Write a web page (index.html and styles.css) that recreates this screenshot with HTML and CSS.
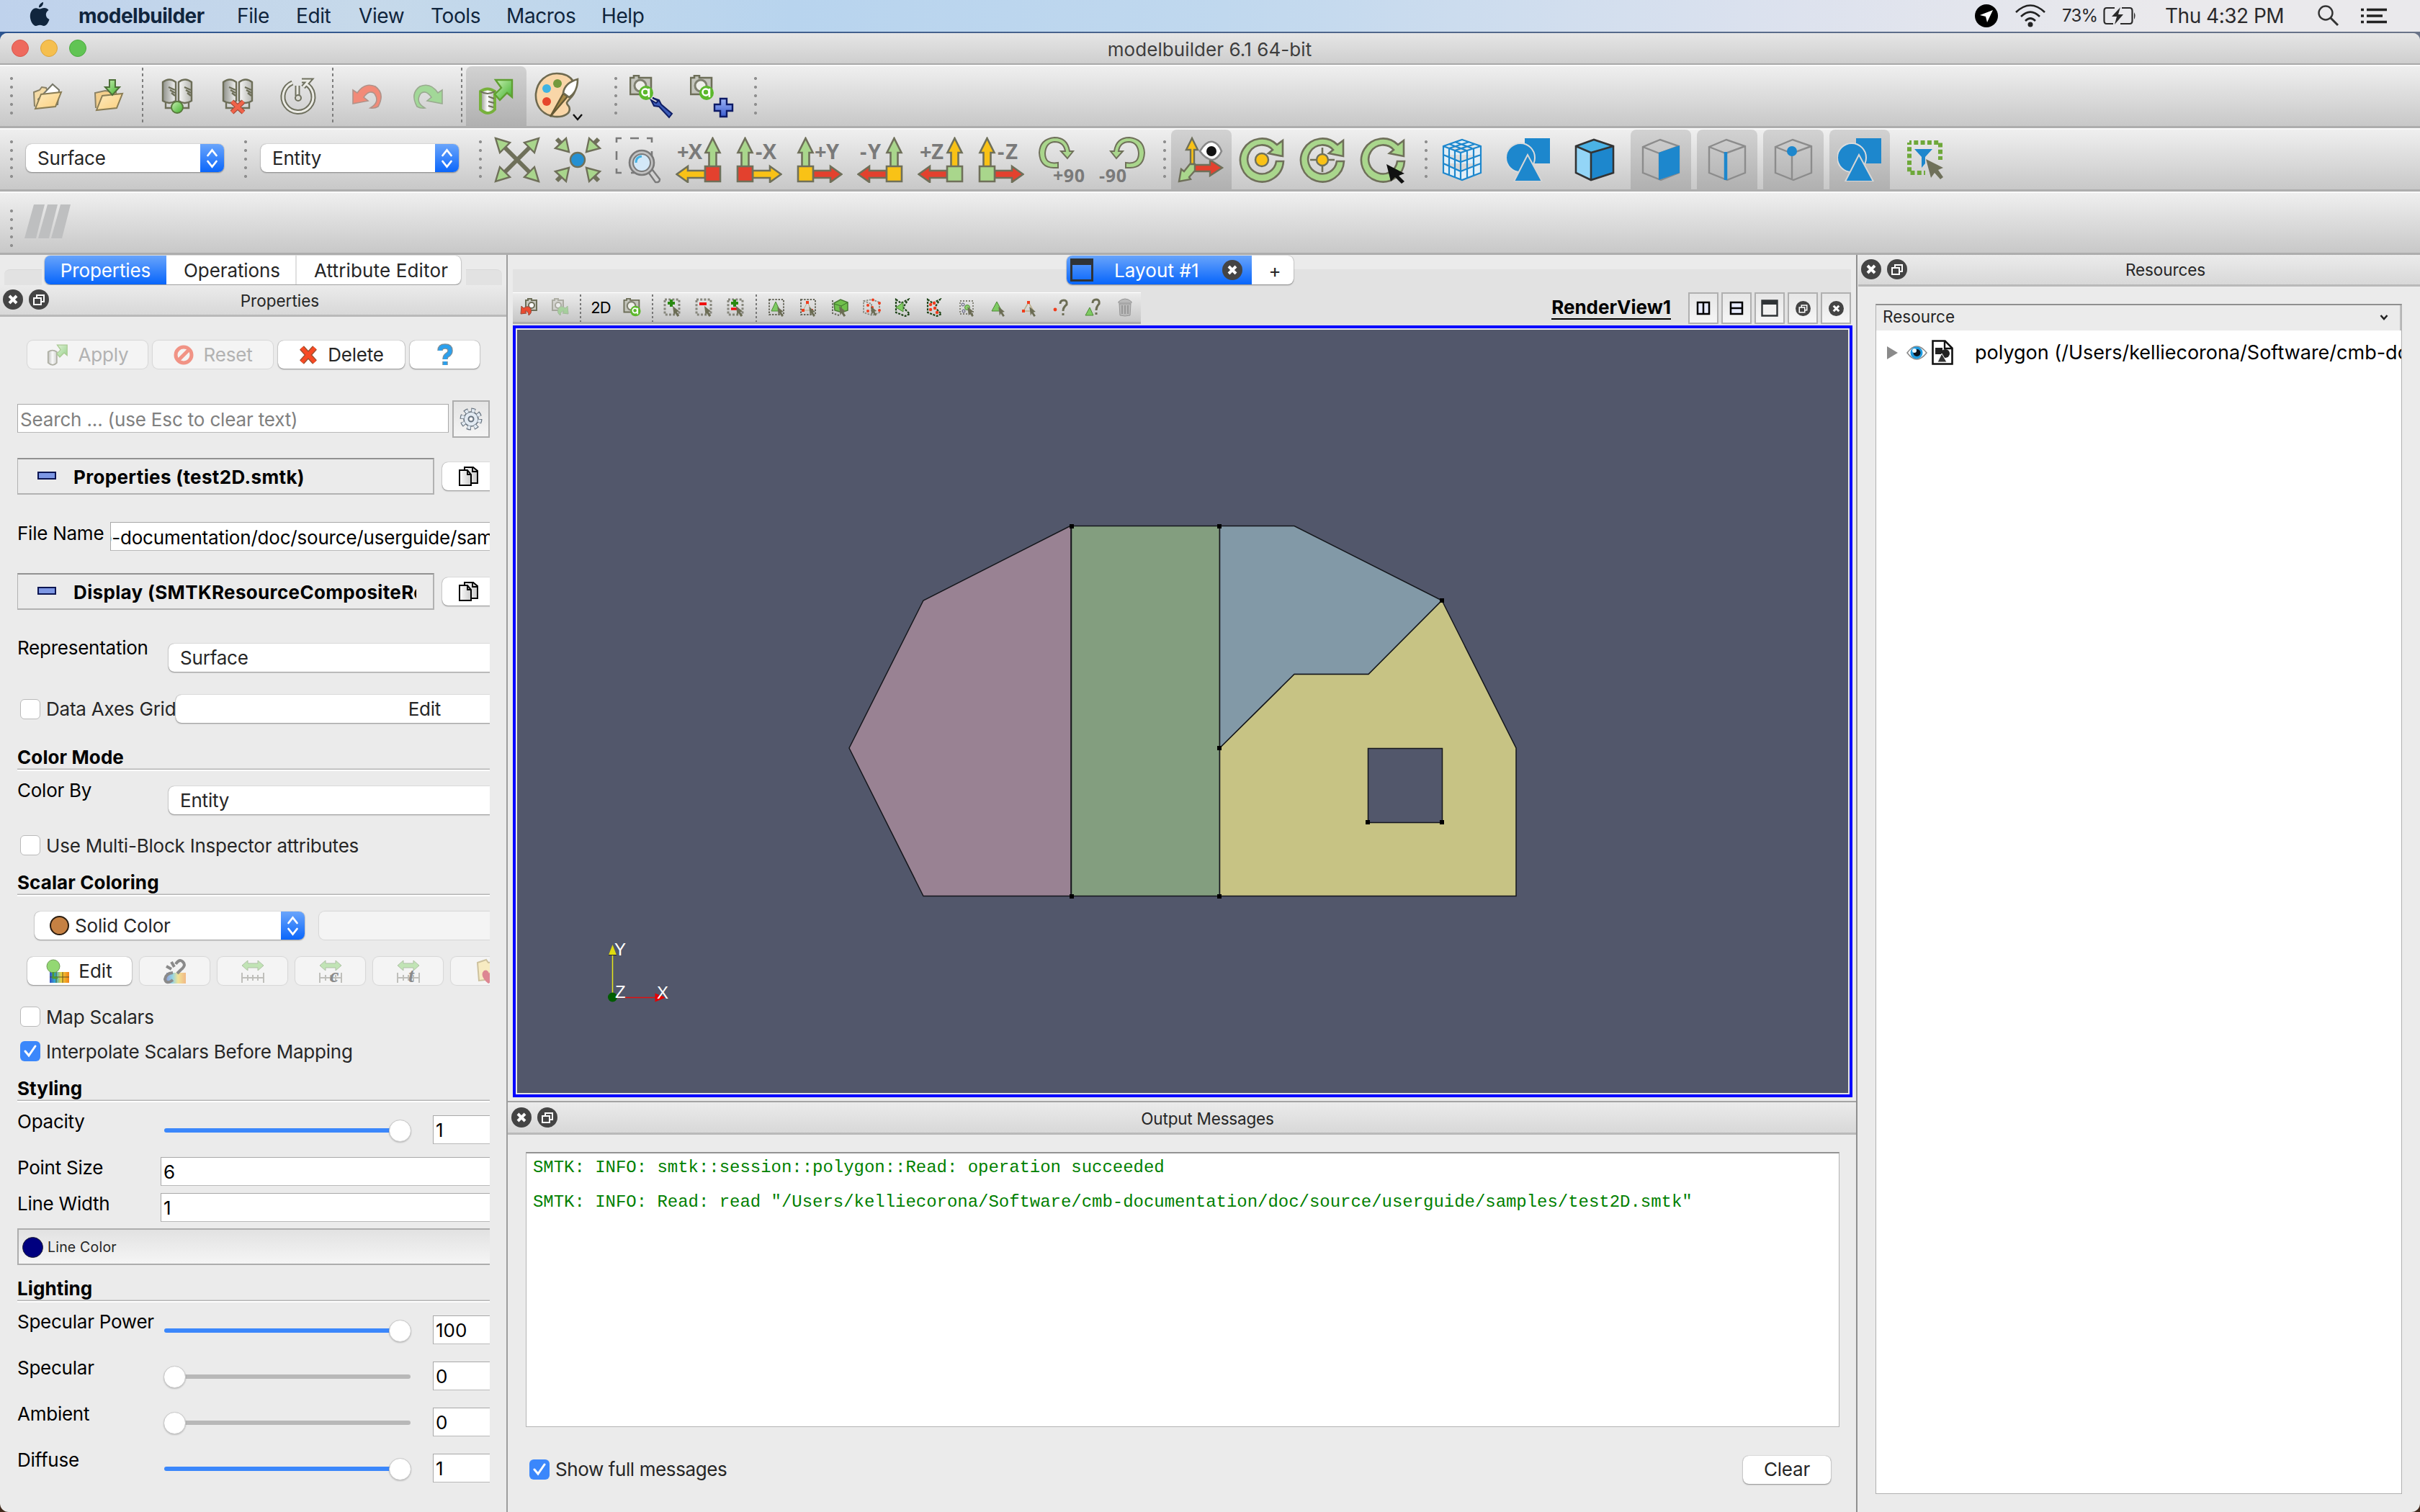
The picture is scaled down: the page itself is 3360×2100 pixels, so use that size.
FILE: index.html
```html
<!DOCTYPE html>
<html lang="en">
<head>
<meta charset="utf-8">
<title>modelbuilder 6.1 64-bit</title>
<link rel="stylesheet" href="styles.css">
</head>
<body>
<svg class="defs" width="0" height="0">
  <defs>
    <linearGradient id="gFolder" x1="0" y1="0" x2="1" y2="1"><stop offset="0" stop-color="#fdebc0"/><stop offset="1" stop-color="#fbcf7c"/></linearGradient>
    <linearGradient id="gSteel" x1="0" x2="1"><stop offset="0" stop-color="#8f918a"/><stop offset=".5" stop-color="#fff"/><stop offset="1" stop-color="#b5b6b0"/></linearGradient>
    <linearGradient id="gGreen" x1="0" y1="0" x2="1" y2="1"><stop offset="0" stop-color="#c9f0b4"/><stop offset="1" stop-color="#3fb02a"/></linearGradient>
    <linearGradient id="gNavy" x1="0" y1="0" x2="0" y2="1"><stop offset="0" stop-color="#9db4f4"/><stop offset="1" stop-color="#3b5ccf"/></linearGradient>
    <linearGradient id="gRainbow" x1="0" x2="1"><stop offset="0" stop-color="#3a4fc0"/><stop offset=".3" stop-color="#2fb4d8"/><stop offset=".6" stop-color="#f0d23a"/><stop offset="1" stop-color="#f07f1a"/></linearGradient>
    <linearGradient id="gPage" x1="0" x2="1"><stop offset="0" stop-color="#fff"/><stop offset="1" stop-color="#c9c9c9"/></linearGradient>
  </defs>
  <symbol id="closeBadge" viewBox="0 0 28 28"><circle cx="14" cy="14" r="14" fill="#444"/><path d="M9 9l10 10M19 9L9 19" stroke="#fff" stroke-width="4"/></symbol>
  <symbol id="floatBadge" viewBox="0 0 28 28"><circle cx="14" cy="14" r="14" fill="#444"/><path d="M11 12V8h10v9h-4M7 12h10v9H7z" fill="none" stroke="#fff" stroke-width="2"/></symbol>
  <symbol id="cursor" viewBox="0 0 12 18"><path d="M0 0l11 9-4 1 4 6-3 2-4-6-2 4z" fill="#6c6d55"/></symbol>
  <symbol id="updown" viewBox="0 0 33 39"><path d="M10.500 16l6-7.500 6 7.500M10.500 24l6 7.500 6-7.500" fill="none" stroke="#fff" stroke-width="2.800" stroke-linecap="round"/></symbol>
  <symbol id="wire" viewBox="0 0 56 60"><path d="M3 12L27 2l26 9v37L28 58 3 48zM3 12l23 9 27-10M26 21v37" fill="none" stroke="#8c8c8c" stroke-width="2.400"/></symbol>
  <symbol id="shapes" viewBox="0 0 62 60"><path d="M26 0h35v35H26z" fill="#1d87cd"/><circle cx="20" cy="27" r="20" fill="#1d87cd" stroke="#dcdcdc" stroke-width="2"/><path d="M30 23l20 37H11z" fill="#1d87cd" stroke="#d6d6d6" stroke-width="2"/></symbol>
  <symbol id="camera" viewBox="0 0 34 36"><path d="M1 4h5V1h7v3h17v23H1z" fill="#c4c5bc" stroke="#6d6e58" stroke-width="2.600"/><circle cx="15" cy="15" r="8" fill="#efefea" stroke="#7f8070" stroke-width="3"/><circle cx="23" cy="25" r="10" fill="#5cb82c"/><circle cx="22" cy="24" r="4.500" fill="none" stroke="#fff" stroke-width="2.500"/><path d="M27 19v12" stroke="#fff" stroke-width="2.500"/></symbol>
  <symbol id="servers" viewBox="0 0 44 50"><path d="M2 5q9-7 18 0v26q-9 6-18 0zM24 5q9-7 18 0v26q-9 6-18 0z" fill="url(#gSteel)" stroke="#6d6e58" stroke-width="2.400"/><path d="M10 12l9 4m-7 0l7 4m-5 0l5 4M32 12l9 4m-7 0l7 4m-5 0l5 4M6 34v7h10M38 34v7H28" stroke="#6d6e58" stroke-width="2.400" fill="none"/></symbol>
  <symbol id="copyPages" viewBox="0 0 30 28"><path d="M9 1h12l6 5v17H9z" fill="url(#gPage)" stroke="#000" stroke-width="2"/><path d="M2 5h11l5 6v15H2z" fill="url(#gPage)" stroke="#000" stroke-width="2"/><path d="M13 5v6h5M20 1v6h6" stroke="#000" stroke-width="1.800" fill="none"/></symbol>
  <symbol id="ring" viewBox="0 0 64 64"><path d="M62 34A30 30 0 1 1 53 11L61 5V27L41 23 47 18A20 20 0 1 0 52 34Z" fill="#a9d68c" stroke="#6f705a" stroke-width="2.600"/></symbol>
  <symbol id="axisUp" viewBox="0 0 64 64"><path d="M51.500 2l10 20h-5v20h-10V22h-5z" stroke="#6f705a" stroke-width="2.600"/></symbol>
  <symbol id="axisLeft" viewBox="0 0 64 64"><path d="M1.500 52L17 41v6h24v10H17v6z" stroke="#6f705a" stroke-width="2.600"/></symbol>
  <symbol id="axisUpL" viewBox="0 0 64 64"><path d="M12.500 2l10 20h-5v20h-10V22h-5z" stroke="#6f705a" stroke-width="2.600"/></symbol>
  <symbol id="axisRight" viewBox="0 0 64 64"><path d="M62.500 52L47 41v6H23v10h24v6z" stroke="#6f705a" stroke-width="2.600"/></symbol>
  <symbol id="range" viewBox="0 0 32 34"><path d="M1 9l8-7v4h14V2l8 7-8 7v-4H9v4z" fill="#8fd678" stroke="#6d8f5a"/><path d="M1 19v14M31 19v14M1 26h30M9 22v8M16 22v8M23 22v8" stroke="#8c8c84" stroke-width="2"/></symbol>
  <symbol id="dashBox" viewBox="0 0 26 26"><path d="M2 2h20v21H2z" fill="none" stroke="#86867c" stroke-width="3" stroke-dasharray="3 2.200"/></symbol>
  <symbol id="dashFine" viewBox="0 0 26 26"><path d="M3 2h20v21H3z" fill="none" stroke="#66665a" stroke-width="2" stroke-dasharray="2.400 1.800"/></symbol>
  <symbol id="dashPoly" viewBox="0 0 26 26"><path d="M3 2l7 5 10-5-7 11 9 9-6 3L3 20z" fill="none" stroke="#1d4216" stroke-width="2.200" stroke-dasharray="3 1.600"/></symbol>
</svg>

<header class="menubar">
  <svg class="apple" width="28" height="34" viewBox="0 0 28 34"><path d="M19 0c.5 4-3 7.500-6 7.500C12.500 4 16 .5 19 0zM14 9.500C16 9.500 17.500 8 20.500 8c2.500 0 4.500 1.300 6 3-5.500 3.500-4.500 10.500 1 13C26 29 23 33 20 33c-2.300 0-3-1.200-5.500-1.200S11 33 8.800 33C5 33 .8 26 .8 19.500.8 12.500 5 8.200 9 8.200c2.300 0 3.700 1.300 5 1.300z" fill="#10253d"/></svg>
  <span class="mi app">modelbuilder</span><span class="mi file">File</span><span class="mi edit">Edit</span><span class="mi view">View</span><span class="mi tools">Tools</span><span class="mi macros">Macros</span><span class="mi help">Help</span>
  <div class="status">
    <svg class="s-loc" width="32" height="32" viewBox="0 0 32 32"><circle cx="16" cy="16" r="16"/><path d="M25 8L7 15l8 2 2 8z" fill="#fff"/></svg>
    <svg class="s-wifi" width="42" height="32" viewBox="0 0 42 32"><g fill="none" stroke="#222" stroke-width="2.600"><path d="M1 11q20-19 40 0M8 17q13-13 26 0M14 23q7-7 14 0"/></g><circle cx="21" cy="28" r="3.500" fill="#222"/></svg>
    <span class="pct">73%</span>
    <svg class="s-bat" width="46" height="26" viewBox="0 0 46 26"><path d="M16 2H5Q1.500 2 1.500 6v14q0 4 3.500 4h9M26 2h11q3.500 0 3.500 4v14q0 4-3.500 4H24" fill="none" stroke="#2a2a2a" stroke-width="2.200"/><path d="M43 8q3 5 0 10zM24 1L12 14h7l-3 11 12-14h-7z" fill="#2a2a2a"/></svg>
    <span class="clock">Thu 4:32 PM</span>
    <svg class="s-find" width="30" height="30" viewBox="0 0 30 30"><circle cx="11" cy="11" r="9.500" fill="none" stroke="#333" stroke-width="2.400"/><path d="M18 18l10 10" stroke="#333" stroke-width="3"/></svg>
    <svg class="s-list" width="36" height="22" viewBox="0 0 36 22"><path d="M0 2.500h4M8 2.500h28M0 11h4M8 11h22M0 19.500h4M8 19.500h28" stroke="#222" stroke-width="3.600"/></svg>
  </div>
</header>

<main class="window">
  <div class="titlebar"><i class="light red"></i><i class="light yellow"></i><i class="light green"></i><span class="wtitle">modelbuilder 6.1 64-bit</span></div>

  <div class="toolbar">
    <i class="handle first"></i>
    <div class="tb wide"><svg width="42" height="40" viewBox="0 0 42 40"><path d="M3 34L2 14l8-3 3-4 6 1 2 5 9-1 1 6" fill="#f4dba6" stroke="#8a8267" stroke-width="2"/><path d="M8 24L28 3l9 8-2 20-22 2z" fill="#fff" stroke="#77786a" stroke-width="2"/><path d="M4 37l8-20 28-3-8 20z" fill="url(#gFolder)" stroke="#8a7d55" stroke-width="2"/></svg></div>
    <div class="tb wide"><svg width="42" height="48" viewBox="0 0 42 48"><path d="M3 40L2 19l14-3 15 2 1 6" fill="#f4cf8c" stroke="#8a8267" stroke-width="2"/><path d="M4 43l8-20 28-3-8 20z" fill="url(#gFolder)" stroke="#8a7d55" stroke-width="2"/><path d="M22 1h8v10h6L26 22 16 11h6z" fill="url(#gGreen)" stroke="#4d7038" stroke-width="2"/></svg></div>
    <i class="sep narrow"></i>
    <div class="tb"><svg width="44" height="50"><use href="#servers"/><circle cx="22" cy="40" r="8" fill="url(#gGreen)" stroke="#587a3c" stroke-width="2"/></svg></div>
    <div class="tb"><svg width="44" height="50"><use href="#servers"/><path d="M14 32l16 15M30 32L14 47" stroke="#a04a38" stroke-width="7"/><path d="M14 32l16 15M30 32L14 47" stroke="#f0634a" stroke-width="4.500"/></svg></div>
    <div class="tb"><svg width="50" height="50" viewBox="0 0 50 50"><path d="M17 6A21 21 0 1 0 35 7M30 3l10 0-8 9M24 10v14" fill="none" stroke="#6f705f" stroke-width="7"/><path d="M17 6A21 21 0 1 0 35 7M30 3l10 0-8 9M24 10v14" fill="none" stroke="#ecece6" stroke-width="3"/><circle cx="25" cy="27" r="4" fill="#dcdcd4" stroke="#6f705f" stroke-width="2"/></svg></div>
    <i class="sep"></i>
    <div class="tb"><svg width="44" height="36" viewBox="0 0 44 36"><path d="M2 28V9l6 4Q18-2 33 4q14 10 4 28-5 3-11 2 14-8 6-20-7-6-15 5l6 5z" fill="#f28a78" stroke="#b0938a" stroke-width="1.600"/></svg></div>
    <div class="tb"><svg width="44" height="36" viewBox="0 0 44 36"><path d="M42 28V9l-6 4Q26-2 11 4-3 14 7 32q5 3 11 2-14-8-6-20 7-6 15 5l-6 5z" fill="#a2d898" stroke="#9aaa90" stroke-width="1.600"/></svg></div>
    <i class="sep narrow"></i>
    <div class="tb on"><svg width="50" height="52" viewBox="0 0 50 52"><path d="M3 19q10-7 20 0v25q-9 10-20 0z" fill="url(#gSteel)" stroke="#77b13c" stroke-width="4"/><path d="M3 19q10 6 20 0M14 26l8 3M14 33l8 2M14 39l7 2" fill="none" stroke="#6d6e58" stroke-width="2"/><path d="M24 3h23v24l-7-6-10 10-7-8 9-9z" fill="url(#gGreen)" stroke="#5f9f32" stroke-width="2.400"/></svg></div>
    <div class="tb palette"><svg width="66" height="68" viewBox="0 0 66 68"><path d="M31 2C54 2 63 22 52 34c-8 9-9 8-4 14 4 10-8 15-20 14C8 59 1 44 2 30 4 12 17 2 31 2z" fill="#f9d6a8" stroke="#6f6a50" stroke-width="2.600"/><circle cx="32" cy="16" r="6" fill="#74993d"/><circle cx="17" cy="23" r="6" fill="#3fb3e3"/><circle cx="17" cy="41" r="6" fill="#e6452c"/><path d="M22 62l18-32 6 4z" fill="#a88a48" stroke="#665a35" stroke-width="2.400"/><path d="M40 29q2-14 20-19 0 18-12 25z" fill="#fff" stroke="#6f6a50" stroke-width="2.600"/><path d="M54 59l6 7 6-7" fill="none" stroke="#111" stroke-width="2.400"/></svg></div>
    <i class="handle second"></i>
    <div class="tb"><svg width="62" height="60" viewBox="0 0 62 60"><use href="#camera" width="34" height="36"/><path d="M32 32l9 3 3 6 15 13-4 5-14-15-7-1-4-8 7 4 3-3z" fill="#3c5cb8" stroke="#101f66" stroke-width="2"/></svg></div>
    <div class="tb"><svg width="62" height="60" viewBox="0 0 62 60"><use href="#camera" width="34" height="36"/><path d="M42 33h9v8h8v9h-8v8h-9v-8h-8v-9h8z" fill="url(#gNavy)" stroke="#0d1a66" stroke-width="2.400"/></svg></div>
    <i class="handle end"></i>
  </div>

  <div class="toolbar">
    <i class="handle first"></i>
    <div class="combo top c1"><span>Surface</span><b><svg width="33" height="39"><use href="#updown"/></svg></b></div>
    <i class="handle third"></i>
    <div class="combo top"><span>Entity</span><b><svg width="33" height="39"><use href="#updown"/></svg></b></div>
    <i class="handle third"></i>
    <div class="tb"><svg width="64" height="64" viewBox="0 0 64 64"><path d="M12 12l40 40M52 12L12 52" stroke="#6f705a" stroke-width="6"/><path d="M2 2l20 6L8 22zM62 2l-6 20L42 8zM2 62l6-20 14 14zM62 62l-20-6 14-14z" fill="#a9d68c" stroke="#6f705a" stroke-width="2.400"/></svg></div>
    <div class="tb"><svg width="64" height="64" viewBox="0 0 64 64"><path d="M3 3l7 7M61 3l-7 7M3 61l7-7M61 61l-7-7" stroke="#6f705a" stroke-width="6"/><path d="M20 21L1 16 16 2zM44 21l19-5L48 2zM20 43L1 48l15 14zM44 43l19 5-15 14z" fill="#a9d68c" stroke="#6f705a" stroke-width="2.400"/><circle cx="32" cy="32" r="10" fill="#2590d2" stroke="#6f705a" stroke-width="2.400"/></svg></div>
    <div class="tb"><svg width="64" height="64" viewBox="0 0 64 64"><path d="M2 8V2h7M21 2h12M44 2h7v6M2 20v12M51 20v6M2 44v6h7M22 50h5" fill="none" stroke="#7a7a7a" stroke-width="2.600"/><path d="M46 49l6-3 10 13q0 5-6 4z" fill="#d2d2d2" stroke="#7a7a7a" stroke-width="2.400"/><circle cx="37" cy="36" r="17" fill="#c2c2c2" stroke="#7a7a7a" stroke-width="2.600"/><circle cx="37" cy="36" r="12" fill="#d3e8f8" stroke="#7a7a7a" stroke-width="2"/><path d="M29 36q0-8 8-9" fill="none" stroke="#45b2e2" stroke-width="3"/></svg></div>
    <div class="tb"><svg width="64" height="64" viewBox="0 0 64 64"><use href="#axisUp" fill="#a9d68c"/><use href="#axisLeft" fill="#f9c216"/><path d="M41 41h21v21H41z" fill="#e3412e" stroke="#6f705a" stroke-width="2.600"/><text class="ax" x="2" y="31" textLength="35">+X</text></svg></div>
    <div class="tb"><svg width="64" height="64" viewBox="0 0 64 64"><use href="#axisUpL" fill="#a9d68c"/><use href="#axisRight" fill="#f9c216"/><path d="M2 41h21v21H2z" fill="#e3412e" stroke="#6f705a" stroke-width="2.600"/><text class="ax" x="27" y="31" textLength="29">-X</text></svg></div>
    <div class="tb"><svg width="64" height="64" viewBox="0 0 64 64"><use href="#axisUpL" fill="#a9d68c"/><use href="#axisRight" fill="#e3412e"/><path d="M2 41h21v21H2z" fill="#f9c216" stroke="#6f705a" stroke-width="2.600"/><text class="ax" x="25" y="31" textLength="34">+Y</text></svg></div>
    <div class="tb"><svg width="64" height="64" viewBox="0 0 64 64"><use href="#axisUp" fill="#a9d68c"/><use href="#axisLeft" fill="#e3412e"/><path d="M41 41h21v21H41z" fill="#f9c216" stroke="#6f705a" stroke-width="2.600"/><text class="ax" x="4" y="31" textLength="29">-Y</text></svg></div>
    <div class="tb"><svg width="64" height="64" viewBox="0 0 64 64"><use href="#axisUp" fill="#f9c216"/><use href="#axisLeft" fill="#e3412e"/><path d="M41 41h21v21H41z" fill="#a9d68c" stroke="#6f705a" stroke-width="2.600"/><text class="ax" x="3" y="31" textLength="33">+Z</text></svg></div>
    <div class="tb"><svg width="64" height="64" viewBox="0 0 64 64"><use href="#axisUpL" fill="#f9c216"/><use href="#axisRight" fill="#e3412e"/><path d="M2 41h21v21H2z" fill="#a9d68c" stroke="#6f705a" stroke-width="2.600"/><text class="ax" x="27" y="31" textLength="28">-Z</text></svg></div>
    <div class="tb"><svg width="64" height="64" viewBox="0 0 64 64"><path d="M27 43V36Q9 39 9 23 10 8 22 7q13 0 15 13h-6l9 10 8-10h-5Q40 1 22 1 2 3 1 22q1 21 20 21z" fill="#a9d68c" stroke="#6f705a" stroke-width="2"/><text class="ax deg" x="20" y="63" textLength="44">+90</text></svg></div>
    <div class="tb"><svg width="64" height="64" viewBox="0 0 64 64"><path d="M37 43V36Q55 39 55 23 54 8 42 7q-13 0-15 13h6L24 30l-8-10h5Q24 1 42 1q20 2 21 21-1 21-20 21z" fill="#a9d68c" stroke="#6f705a" stroke-width="2"/><text class="ax deg" x="0" y="63" textLength="38">-90</text></svg></div>
    <i class="handle fourth"></i>
    <div class="tb on"><svg width="64" height="64" viewBox="0 0 64 64"><path d="M17 38V18h-6L19 2l8 16h-5v20z" fill="#f9c216" stroke="#6f705a" stroke-width="2.400"/><path d="M21 39h23v-7l17 11-17 11v-6H21z" fill="#e3412e" stroke="#6f705a" stroke-width="2.400"/><path d="M16 38h7v9l-8 9 2 3-16 3 3-17 4 3z" fill="#a9d68c" stroke="#6f705a" stroke-width="2.400"/><path d="M30 20q9-15 18-13 8 2 12 13-5 11-13 12-9-1-17-12z" fill="#fff" stroke="#888" stroke-width="2.600"/><circle cx="46" cy="20" r="7" fill="#111"/></svg></div>
    <div class="tb"><svg width="64" height="64" viewBox="0 0 64 64"><use href="#ring"/><circle cx="32" cy="32" r="9" fill="#f9c216" stroke="#6f705a" stroke-width="2.400"/></svg></div>
    <div class="tb"><svg width="64" height="64" viewBox="0 0 64 64"><use href="#ring"/><path d="M32 15v34M15 32h34" stroke="#6f705a" stroke-width="2.600"/><circle cx="32" cy="32" r="8" fill="#f9c216" stroke="#6f705a" stroke-width="2.400"/></svg></div>
    <div class="tb"><svg width="64" height="64" viewBox="0 0 64 64"><use href="#ring"/><path d="M37 38l25 13-8 3 8 8-4 3-9-9-6 6z" fill="#111"/></svg></div>
    <i class="handle fifth"></i>
    <div class="views">
      <div class="tb"><svg width="56" height="60" viewBox="0 0 56 60"><path d="M2 11L28 2l26 9v37L28 58 2 48zM2 11l24 9 28-9M26 20v38M2 23l24 10 28-10M2 35l24 11 28-11M10 8l24 9M18 5l24 9M46 8L18 17M38 5L10 14M10 14v37M18 17v37M35 17v38M44 14v38" fill="#e2eff8" stroke="#1d87cd" stroke-width="2.200"/></svg></div>
      <div class="tb"><svg width="62" height="60"><use href="#shapes"/></svg></div>
      <div class="tb"><svg width="56" height="60" viewBox="0 0 56 60"><path d="M2 11l21 9v38L2 48z" fill="#93d5f7"/><path d="M23 20l31-9v37L23 58z" fill="#1d87cd"/><path d="M2 11l25-9 27 9-31 9z" fill="#4bb3e6"/><path d="M2 11l25-9 27 9v37L23 58 2 48zM2 11l21 9 31-9M23 20v38" fill="none" stroke="#333" stroke-width="2.600"/></svg></div>
      <div class="tb on"><svg width="56" height="60"><use href="#wire"/><path d="M25 20l29-10v38L25 58z" fill="#1d87cd"/></svg></div>
      <div class="tb on"><svg width="56" height="60"><use href="#wire"/><path d="M26 19v39" stroke="#1d87cd" stroke-width="4.500"/></svg></div>
      <div class="tb on"><svg width="56" height="60"><use href="#wire"/><circle cx="26" cy="18" r="7" fill="#1d87cd"/></svg></div>
      <div class="tb on"><svg width="62" height="60"><use href="#shapes"/></svg></div>
      <div class="tb"><svg width="54" height="56" viewBox="0 0 54 56"><path d="M4 4h43v24M4 4v42h22" fill="none" stroke="#6ea83a" stroke-width="6" stroke-dasharray="6 3.300" stroke-dashoffset="3"/><path d="M11 13h25L26 24v9l-5 6V24z" fill="#1d87cd"/><path d="M27 27l24 12-7 3 7 10-4 3-8-9-5 7z" fill="#6f705a"/></svg></div>
    </div>
  </div>

  <div class="toolbar last">
    <i class="handle first"></i>
    <svg class="slashes" width="64" height="47" viewBox="0 0 64 47"><path d="M13 0h15L16 47H0zM32 0h14L34 47H19zM50 0h14L52 47H37z" fill="#bebfc0"/></svg>
  </div>

  <div class="body">
    <section class="left">
      <div class="tabrow"><i class="pane pl"></i><div class="tabs"><span class="t on">Properties</span><span class="t">Operations</span><span class="t">Attribute Editor</span></div><i class="pane pr"></i></div>
      <div class="dock"><svg width="28" height="28"><use href="#closeBadge"/></svg><svg width="28" height="28"><use href="#floatBadge"/></svg><span class="dt">Properties</span></div>
      <div class="scroll">
        <div class="r btns">
          <div class="btn off apply"><svg width="30" height="32" viewBox="0 0 50 52"><path d="M3 19q10-7 20 0v25q-9 10-20 0z" fill="url(#gSteel)" stroke="#6d6e58" stroke-width="3"/><path d="M24 3h23v24l-7-6-10 10-7-8 9-9z" fill="url(#gGreen)" stroke="#5f9f32" stroke-width="2"/></svg>Apply</div>
          <div class="btn off reset"><svg width="28" height="28" viewBox="0 0 28 28"><circle cx="14" cy="14" r="11" fill="none" stroke="#ef3418" stroke-width="5"/><path d="M6 22L22 6" stroke="#ef3418" stroke-width="5"/></svg>Reset</div>
          <div class="btn delete"><svg width="26" height="26" viewBox="0 0 26 26"><path d="M4 3l18 20M22 3L4 23" stroke="#9a5030" stroke-width="8"/><path d="M4 3l18 20M22 3L4 23" stroke="#f74a24" stroke-width="5.500"/></svg>Delete</div>
          <div class="btn q"><svg width="22" height="30" viewBox="0 0 22 30"><path d="M4 9q0-6 7-6t7 6q0 4-4 6-3 2-3 6M11 24v5" fill="none" stroke="#7d8e98" stroke-width="7.500"/><path d="M4 9q0-6 7-6t7 6q0 4-4 6-3 2-3 6M11 24v5" fill="none" stroke="#2ba0ee" stroke-width="5"/></svg></div>
        </div>
        <div class="r search"><div class="field">Search ... (use Esc to clear text)</div><div class="gear"><svg width="32" height="32" viewBox="0 0 32 32"><circle cx="16" cy="16" r="12.500" fill="none" stroke="#66727e" stroke-width="6" stroke-dasharray="5.500 4.300"/><circle cx="16" cy="16" r="10" fill="#e2eaf2" stroke="#66727e" stroke-width="1.500"/><circle cx="16" cy="16" r="12" fill="none" stroke="#e2eaf2" stroke-width="4.500" stroke-dasharray="4 5.420" stroke-dashoffset="-.8"/><circle cx="16" cy="16" r="3.500" fill="#f4f4f4" stroke="#66727e" stroke-width="2"/></svg></div></div>
        <div class="r group g1"><div class="ghead"><i></i><b>Properties (test2D.smtk)</b></div><div class="btn cut"><svg width="30" height="28"><use href="#copyPages"/></svg></div></div>
        <div class="r frow file-row"><label>File Name</label><div class="field"><span>b-documentation/doc/source/userguide/samples</span></div></div>
        <div class="r group g2"><div class="ghead"><i></i><b>Display (SMTKResourceCompositeRepresentation)</b></div><div class="btn cut"><svg width="30" height="28"><use href="#copyPages"/></svg></div></div>
        <div class="r frow rep"><label>Representation</label><div class="btn cut pop">Surface</div></div>
        <div class="r crow axes"><i class="chk"></i><span>Data Axes Grid</span><div class="btn cut axed">Edit</div></div>
        <h3 class="r sec s1">Color Mode</h3>
        <div class="r frow colorby"><label>Color By</label><div class="btn cut pop">Entity</div></div>
        <div class="r crow multi"><i class="chk"></i><span>Use Multi-Block Inspector attributes</span></div>
        <h3 class="r sec s2">Scalar Coloring</h3>
        <div class="r solid"><div class="combo"><em></em><span>Solid Color</span><b><svg width="33" height="39"><use href="#updown"/></svg></b></div><div class="btn off cut comp"></div></div>
        <div class="r maps">
          <div class="btn medit"><svg width="32" height="34" viewBox="0 0 32 34"><path d="M4 18h27v15H4z" fill="url(#gRainbow)"/><path d="M4 25h27M13 18v15M22 18v15" stroke="#605020" stroke-width="1"/><circle cx="9" cy="10" r="9" fill="#93d873" stroke="#6f9a58"/><path d="M9 18v8h6" stroke="#4c9a30" stroke-width="3" fill="none"/></svg>Edit</div>
          <div class="btn off m"><svg width="32" height="36" viewBox="0 0 32 36"><path d="M4 20h27v15H4z" fill="url(#gRainbow)"/><path d="M17 8q5-8 10-3t-3 11l-5 5M13 20q-10 1-11 9 2 8 11 1M11 5l4 7M4 11l7 4" fill="none" stroke="#222" stroke-width="4"/></svg></div>
          <div class="btn off m"><svg width="32" height="34"><use href="#range"/></svg></div>
          <div class="btn off m"><svg width="32" height="34"><use href="#range"/><text class="mk" x="15" y="32">c</text></svg></div>
          <div class="btn off m"><svg width="32" height="34"><use href="#range"/><text class="mk" x="16" y="32">t</text></svg></div>
          <div class="btn off m cutm"><svg width="34" height="36" viewBox="0 0 34 36"><path d="M2 6l12-4 3 4 14-2v24L4 31z" fill="#fbe391" stroke="#a8904a" stroke-width="2"/><path d="M17 35Q4 24 11 17q5-2 7 4 4-7 9-3 4 8-10 17z" fill="#c81d32"/></svg></div>
        </div>
        <div class="r crow mapsc"><i class="chk"></i><span>Map Scalars</span></div>
        <div class="r crow interp"><i class="chk yes"><svg width="28" height="28" viewBox="0 0 28 28"><path d="M7 14l5 6 9-13" fill="none" stroke="#fff" stroke-width="3" stroke-linecap="round"/></svg></i><span>Interpolate Scalars Before Mapping</span></div>
        <h3 class="r sec s3">Styling</h3>
        <div class="r frow sl op"><label>Opacity</label><div class="track full"><i></i></div><div class="field">1</div></div>
        <div class="r frow num ps"><label>Point Size</label><div class="field">6</div></div>
        <div class="r frow num lw"><label>Line Width</label><div class="field">1</div></div>
        <div class="r linecolor"><i></i>Line Color</div>
        <h3 class="r sec s4">Lighting</h3>
        <div class="r frow sl op"><label>Specular Power</label><div class="track full"><i></i></div><div class="field">100</div></div>
        <div class="r frow sl li"><label>Specular</label><div class="track"><i></i></div><div class="field">0</div></div>
        <div class="r frow sl li"><label>Ambient</label><div class="track"><i></i></div><div class="field">0</div></div>
        <div class="r frow sl li"><label>Diffuse</label><div class="track full"><i></i></div><div class="field">1</div></div>
      </div>
    </section>

    <section class="center">
      <div class="layouts"><div class="tabs"><span class="t on lay"><svg width="32" height="32" viewBox="0 0 32 32"><path d="M1.500 1.500h29v29h-29z" fill="none" stroke="#2f3336" stroke-width="3"/><path d="M1 1h30v8H1z" fill="#2f3336"/></svg><span>Layout #1</span><svg width="28" height="28"><use href="#closeBadge"/></svg></span><span class="t plus">+</span></div></div>
      <div class="viewbar">
        <div class="vtools">
          <div class="v"><svg width="26" height="26" viewBox="0 0 26 26"><path d="M9 3h3V1h5v2h7v14H9z" fill="#c9c9c0" stroke="#6d6e58" stroke-width="2"/><circle cx="17" cy="10" r="4" fill="#fff" stroke="#6d6e58" stroke-width="2"/><path d="M2 22l1-11 3 3q7-5 10 1 2 6-3 9 0-6-5-6l2 3z" fill="#ea4b30" stroke="#9a4a38"/></svg></div>
          <div class="v dim"><svg width="26" height="26" viewBox="0 0 26 26"><path d="M2 3h3V1h5v2h7v14H2z" fill="#c9c9c0" stroke="#6d6e58" stroke-width="2"/><circle cx="10" cy="10" r="4" fill="#fff" stroke="#6d6e58" stroke-width="2"/><path d="M24 22l-1-11-3 3q-7-5-10 1-2 6 3 9 0-6 5-6l-2 3z" fill="#6fc95a" stroke="#6a9a58"/></svg></div>
          <i class="vsep"></i>
          <div class="v d2">2D</div>
          <div class="v"><svg width="26" height="26"><use href="#camera"/></svg></div>
          <i class="vsep"></i>
          <div class="v"><svg width="26" height="26"><use href="#dashBox"/><path d="M6 7h10M11 2v10" stroke="#2a8a12" stroke-width="4"/><use href="#cursor" x="13" y="11" width="10" height="15"/></svg></div>
          <div class="v"><svg width="26" height="26"><use href="#dashBox"/><path d="M6 8h10" stroke="#f01010" stroke-width="4"/><use href="#cursor" x="13" y="11" width="10" height="15"/></svg></div>
          <div class="v"><svg width="26" height="26"><use href="#dashBox"/><path d="M6 7h10M11 2v10" stroke="#2a8a12" stroke-width="4"/><path d="M6 15h10" stroke="#f01010" stroke-width="3.500"/><use href="#cursor" x="13" y="11" width="10" height="15"/></svg></div>
          <i class="vsep"></i>
          <div class="v"><svg width="26" height="26"><use href="#dashFine"/><path d="M12 5l6 13H6z" fill="#7ecb62" stroke="#4f8a38"/><use href="#cursor" x="14" y="12" width="10" height="14"/></svg></div>
          <div class="v"><svg width="26" height="26"><use href="#dashFine"/><path d="M12 6l6 11H6z" fill="none" stroke="#bcae8a"/><path d="M10 4h4v4h-4zM4 15h4v4H4zM16 15h4v4h-4z" fill="#f03c1c"/><use href="#cursor" x="14" y="12" width="10" height="14"/></svg></div>
          <div class="v"><svg width="26" height="26"><path d="M3 3v18l9 3" fill="none" stroke="#66665a" stroke-width="2" stroke-dasharray="2.400 1.800"/><path d="M5 7l9-5 10 4v11l-8 3-10-3z" fill="#70c04c" stroke="#4a7a34" stroke-width="1.500"/><path d="M5 8l10 3 9-5M15 11v9" stroke="#3e6e2c" fill="none"/><use href="#cursor" x="12" y="11" width="10" height="15"/></svg></div>
          <div class="v"><svg width="26" height="26" viewBox="0 0 26 26"><path d="M2 4l12-2 10 4v14l-10 4L2 20zM2 4l11 4v15" fill="none" stroke="#8a8a80" stroke-width="1.800" stroke-dasharray="2.500 1.500"/><g fill="#f03c1c"><circle cx="15" cy="2.500" r="2"/><circle cx="24" cy="7" r="2"/><circle cx="8" cy="10" r="2"/><circle cx="14" cy="13" r="2"/><circle cx="24" cy="17" r="2"/><circle cx="8" cy="18" r="2"/></g><use href="#cursor" x="12" y="11" width="9" height="14"/></svg></div>
          <div class="v"><svg width="26" height="26"><use href="#dashPoly"/><path d="M13 6v13L3 13z" fill="#7ecb62" stroke="#4f8a38"/></svg></div>
          <div class="v"><svg width="26" height="26"><use href="#dashPoly"/><g fill="#f03c1c"><circle cx="7" cy="9" r="2.200"/><circle cx="12" cy="7" r="2.200"/><circle cx="7" cy="16" r="2.200"/><circle cx="13" cy="14" r="2.200"/><circle cx="16" cy="20" r="2.200"/></g></svg></div>
          <div class="v"><svg width="26" height="26" viewBox="0 0 26 26"><path d="M4 4h18v18H4z" fill="none" stroke="#7c7c70" stroke-width="1.800" stroke-dasharray="2 2"/><circle cx="14" cy="13" r="3.500" fill="#8ed06f" stroke="#4f8a38"/><circle cx="8" cy="9" r="2" fill="none" stroke="#557"/><circle cx="9" cy="18" r="2" fill="none" stroke="#557"/><use href="#cursor" x="14" y="12" width="10" height="14"/></svg></div>
          <div class="v"><svg width="26" height="26"><path d="M11 5l7 13H4z" fill="#7ecb62" stroke="#4f8a38"/><use href="#cursor" x="13" y="12" width="10" height="14"/></svg></div>
          <div class="v"><svg width="26" height="26"><path d="M11 6l7 12H4z" fill="none" stroke="#bcae8a" stroke-width="1.500"/><path d="M9 4h4v4H9zM2 16h4v4H2z" fill="#f03c1c"/><use href="#cursor" x="12" y="12" width="10" height="14"/></svg></div>
          <div class="v"><svg width="26" height="26"><circle cx="4" cy="16" r="2.400" fill="#f03c1c"/><path d="M11 8q0-5 5-5t4 6q-5 4-5 9M15 21v3" fill="none" stroke="#6c6d55" stroke-width="3"/></svg></div>
          <div class="v"><svg width="26" height="26"><path d="M8 13l5 11H2z" fill="#7ecb62" stroke="#4f8a38"/><path d="M12 7q0-5 5-5t4 6q-4 4-4 9M17 20v3" fill="none" stroke="#6c6d55" stroke-width="3"/></svg></div>
          <div class="v"><svg width="26" height="26" viewBox="0 0 26 26"><path d="M4 5Q13-3 22 5v2H4zM5 8h16l-1 16q-7 2-14 0z" fill="#b9b9b9" stroke="#969696"/><path d="M9 10v12M13 10v12M17 10v12" stroke="#8e8e8e" stroke-width="1.500"/></svg></div>
        </div>
        <span class="rv">RenderView1</span>
        <div class="vb"><svg width="20" height="20" viewBox="0 0 20 20"><path d="M2 2h16v16H2zM10 2v16" fill="#e8ecff" stroke="#000" stroke-width="2.500"/></svg></div>
        <div class="vb"><svg width="20" height="20" viewBox="0 0 20 20"><path d="M2 2h16v16H2zM2 10h16" fill="#e8ecff" stroke="#000" stroke-width="2.500"/></svg></div>
        <div class="vb"><svg width="24" height="24" viewBox="0 0 24 24"><path d="M1.500 1.500h21v21h-21z" fill="#f1f1f1" stroke="#2f3336" stroke-width="2.400"/><path d="M1 1h22v6H1z" fill="#2f3336"/></svg></div>
        <div class="vb"><svg width="21" height="21"><use href="#floatBadge"/></svg></div>
        <div class="vb"><svg width="21" height="21"><use href="#closeBadge"/></svg></div>
      </div>
      <div class="render">
        <svg width="1848" height="1060" viewBox="718 458 1848 1060">
          <g stroke="#15171c" stroke-width="1.500">
            <path d="M1487 730L1282 834 1179 1039 1282 1244.500H1487z" fill="#998293"/>
            <path d="M1487.500 730.500H1693.500V1244.500H1487.500z" fill="#839e7f"/>
            <path d="M1693.500 730.500H1797L2002 834 1900 936.500H1797L1693.500 1039z" fill="#8299a7"/>
            <path fill-rule="evenodd" d="M1693.500 1039L1797 936.500H1900L2002 834 2105 1039V1244.500H1693.500zM1899.500 1039.500V1142.500H2002.500V1039.500z" fill="#c7c384"/>
          </g>
          <path d="M1485 728h6v6h-6zM1690 728h6v6h-6zM1999 831h6v6h-6zM1690 1036h6v6h-6zM1896 1139h6v6h-6zM1999 1139h6v6h-6zM1485 1242h6v6h-6zM1690 1242h6v6h-6z"/>
          <path d="M850.500 1385V1326" stroke="#e5e51c" stroke-width="1.500"/><path d="M850.500 1312l5.500 14.500h-11z" fill="#e0dc10"/><path d="M845 1326.500h11" stroke="#222"/>
          <path d="M852 1385.500h58" stroke="#e01010" stroke-width="1.500"/><path d="M924 1385.500l-14.500 6v-12z" fill="#e60000"/>
          <circle cx="850.500" cy="1385" r="6.500" fill="#005c00"/>
          <text class="axl" x="853" y="1327">Y</text><text class="axl" x="854" y="1386">Z</text><text class="axl" x="912" y="1387">X</text>
        </svg>
      </div>
      <div class="dock out"><svg width="28" height="28"><use href="#closeBadge"/></svg><svg width="28" height="28"><use href="#floatBadge"/></svg><span class="dt">Output Messages</span></div>
      <div class="msgs"><p>SMTK: INFO: smtk::session::polygon::Read: operation succeeded</p><p>SMTK: INFO: Read: read "/Users/kelliecorona/Software/cmb-documentation/doc/source/userguide/samples/test2D.smtk"</p></div>
      <div class="foot"><i class="chk yes"><svg width="28" height="28" viewBox="0 0 28 28"><path d="M7 14l5 6 9-13" fill="none" stroke="#fff" stroke-width="3" stroke-linecap="round"/></svg></i><span>Show full messages</span><div class="btn clear">Clear</div></div>
    </section>

    <section class="right">
      <div class="dock"><svg width="28" height="28"><use href="#closeBadge"/></svg><svg width="28" height="28"><use href="#floatBadge"/></svg><span class="dt">Resources</span></div>
      <div class="tree">
        <div class="thead"><span>Resource</span><svg width="12" height="10" viewBox="0 0 12 10"><path d="M1.500 2L6 7l4.500-5" fill="none" stroke="#222" stroke-width="2.600"/></svg></div>
        <div class="trow">
          <svg class="tri" width="15" height="18" viewBox="0 0 15 18"><path d="M0 0l15 9L0 18z" fill="#8a8a8a"/></svg>
          <svg class="eye" width="29" height="20" viewBox="0 0 29 20"><path d="M1 10Q14-8 28 10 14 28 1 10z" fill="#fff" stroke="#8a8a8a" stroke-width="1.600"/><circle cx="14" cy="10" r="8.500" fill="#1f9be0"/><circle cx="14.500" cy="10" r="5" fill="#0a1420"/><circle cx="11" cy="7" r="3" fill="#e8f6ff"/></svg>
          <svg class="doc" width="30" height="35" viewBox="0 0 30 35"><path d="M1.500 1.500h17l10 10v22h-27z" fill="#fff" stroke="#111" stroke-width="2.600"/><path d="M18 1v11h10" fill="none" stroke="#111" stroke-width="2.400"/><path d="M5 11h10v9H5z" fill="#222"/><circle cx="19" cy="19" r="6" fill="#222"/><path d="M14 19l7 12H8z" fill="#333" stroke="#fff"/></svg>
          <span>polygon (/Users/kelliecorona/Software/cmb-documentation/doc/source/userguide)</span>
        </div>
      </div>
    </section>
  </div>
</main>
</body>
</html>
```
FILE: styles.css
```css
* { box-sizing: border-box; }
body { margin: 0; width: 3360px; height: 2100px; overflow: hidden; background: linear-gradient(90deg, #2d5590, #6a7488) top/100% 60px no-repeat, #40291b; font: 26px/1 Inter, "Liberation Sans", sans-serif; color: #262626; }
i, em { font-style: normal; }
svg { flex: none; display: block; overflow: visible; }
.defs { height: 0; }

.menubar { height: 44px; display: flex; align-items: center; padding: 0 46px 0 41px; background: linear-gradient(90deg, #bfd2ec 0, #c6d9ea 500px, #b8d4ee 1100px, #c0d8ee 1700px, #dde2ee 2500px, #eae9ec 3000px); color: #10253d; font-size: 28px; }
.apple { margin: 0 40px 4px 0; }
.mi { flex: none; white-space: nowrap; letter-spacing: -.4px; }
.app { width: 220px; font-weight: 700; letter-spacing: -.5px; }
.file { width: 82px; } .edit { width: 87px; } .view { width: 100px; } .tools { width: 105px; } .macros { width: 132px; }
.status { margin-left: auto; display: flex; align-items: center; color: #2a2a2c; white-space: nowrap; }
.s-wifi { margin: 0 23px 0 24px; }
.pct { font-size: 24px; width: 57px; letter-spacing: -.8px; }
.s-bat { margin-right: 40px; }
.clock { width: 212px; letter-spacing: -.5px; }
.s-list { margin-left: 30px; }

.window { height: 2054px; margin-top: 2px; background: #ebebeb; border-radius: 10px 10px 12px 12px; overflow: hidden; display: flex; flex-direction: column; }
.titlebar { height: 44px; background: linear-gradient(#e6e6e6, #cecece); border-bottom: 2px solid #a9a9a9; display: flex; align-items: center; padding-left: 16px; gap: 16px; flex: none; }
.light { width: 24px; height: 24px; border-radius: 50%; flex: none; }
.red { background: #ee6a5e; border: 1px solid #d6564b; } .yellow { background: #f5bf4f; border: 1px solid #d9a33c; } .green { background: #61c454; border: 1px solid #4caa3f; }
.wtitle { flex: 1; text-align: center; margin: 3px 137px 0 0; color: #3e3e3e; letter-spacing: .08px; }

.toolbar { height: 88px; flex: none; display: flex; background: linear-gradient(#efefef, #c8c8c8); border-top: 2px solid #fafafa; border-bottom: 3px solid #adadad; }
.toolbar.last { align-items: center; }
.handle { flex: none; height: 54px; margin-top: 14px; background: radial-gradient(circle at 2px 2px, #8f8f8f 1.800px, transparent 2.300px) 14px 1px/40px 12px repeat-y; }
.first { width: 23px; }
.second { width: 24px; margin-left: 24px; }
.end { width: 24px; margin-left: 2px; }
.tb { width: 84px; height: 84px; flex: none; display: flex; align-items: center; justify-content: center; }
.tb.wide { width: 85px; }
.tb.on { background: linear-gradient(#d2d2d2, #b0b0b0); border-radius: 8px 8px 0 0; }
.sep { width: 12px; flex: none; margin: 2px 0; background: linear-gradient(#7d7d7d 50%, transparent 50%) 5px 0/2px 8px repeat-y; }
.sep.narrow { width: 11px; background-position-x: 4px; }
.palette svg { margin-left: 4px; }
.combo { flex: none; height: 39px; background: #fff; border-radius: 8px; box-shadow: 0 1px 2px rgba(0,0,0,.35), 0 0 1px rgba(0,0,0,.5); display: flex; align-items: center; overflow: hidden; }
.combo b { margin-left: auto; background: linear-gradient(#6aa5fb, #0a66fb); height: 39px; width: 33px; }
.combo.top { width: 275px; margin-top: 20px; padding-left: 16px; letter-spacing: -.2px; }
.c1 { margin-left: 13px; }
.third { width: 37px; margin-left: 14px; }
.third + .tb { margin-left: -12px; }
.fourth { width: 25px; margin-left: 1px; }
.fifth { width: 24px; margin-left: 2px; }
.ax { font: 700 29px "Open Sans", sans-serif; fill: #7a7a7a; }
.ax.deg { font-size: 25px; }
.views { display: flex; gap: 8px; }
.slashes { margin: -5px 0 0 11px; }

.body { flex: 1; display: flex; min-height: 0; }
.left { width: 705px; border-right: 2px solid #9d9d9d; flex: none; display: flex; flex-direction: column; }
.tabrow { height: 42px; display: flex; justify-content: space-between; align-items: flex-end; padding: 0 6px; flex: none; }
.pane { height: 22px; background: #e2e2e2; border-top: 1px solid #d9d9d9; }
.pl { width: 52px; border-radius: 8px 0 0 0; } .pr { width: 50px; border-radius: 0 8px 0 0; }
.tabs { height: 40px; margin-bottom: 1px; display: flex; background: #fff; border-radius: 8px; box-shadow: 0 1px 2px rgba(0,0,0,.4), 0 0 1px rgba(0,0,0,.4); overflow: hidden; }
.left .tabs { margin-right: 3px; }
.t { display: flex; align-items: center; justify-content: center; letter-spacing: -.1px; white-space: nowrap; padding-top: 2px; }
.t.on { background: linear-gradient(#68a4fb, #0765fb); color: #fff; }
.left .t:nth-child(1) { width: 169px; } .left .t:nth-child(2) { width: 181px; padding-left: 3px; border-right: 2px solid #e0e0e0; } .left .t:nth-child(3) { width: 228px; padding-left: 6px; letter-spacing: .15px; }
.dock { height: 44px; flex: none; display: flex; align-items: center; gap: 8px; padding: 0 0 2px 4px; background: linear-gradient(#ebebeb, #d8d8d8); border-bottom: 3px solid #b9b9b9; font-size: 22.500px; }
.dt { flex: 1; text-align: center; margin: 5px 2px 0 0; }
.scroll { width: 680px; overflow: hidden; flex: 1; padding-left: 24px; }
.r { display: flex; white-space: nowrap; }
.btn { height: 39px; flex: none; background: #fff; border-radius: 8px; box-shadow: 0 1px 2px rgba(0,0,0,.38), 0 0 1px rgba(0,0,0,.5); display: flex; align-items: center; justify-content: center; }
.btn.off { background: #f4f4f4; color: #b2b2b2; box-shadow: 0 0 1px 1px #d6d6d6; }
.btn.off svg { opacity: .5; }
.btn.cut { border-radius: 8px 0 0 8px; }
.btns { margin-top: 33px; padding-left: 14px; gap: 7px; }
.btns .btn { gap: 14px; letter-spacing: -.2px; }
.apply, .reset { width: 167px; } .delete { width: 176px; } .q { width: 97px; }
.search { margin-top: 44px; align-items: center; gap: 5px; }
.field { background: #fff; border: 1px solid #a8a8a8; border-bottom-color: #b9b9b9; height: 40px; line-height: 40px; color: #000; overflow: hidden; padding-left: 3px; flex: none; }
.search .field { width: 599px; color: #808080; letter-spacing: -.16px; margin-top: -3px; line-height: 42px; }
.gear { width: 52px; height: 52px; border: 2px solid #adadad; background: linear-gradient(#e4e4e4, #f4f4f4); display: flex; align-items: center; justify-content: center; }
.group { align-items: center; height: 51px; }
.g1 { margin-top: 28px; } .g2 { margin-top: 31px; }
.ghead { flex: none; width: 579px; height: 51px; border: 2px solid #b2b2b2; border-top-color: #919191; border-left-width: 1px; display: flex; align-items: center; padding: 2px 23px 0 27px; color: #000; overflow: hidden; }
.ghead i { width: 26px; height: 11px; border: 2px solid #0b1552; background: #7d97e4; margin-right: 24px; flex: none; margin-top: -4px; }
.ghead b { overflow: hidden; font-weight: 700; letter-spacing: .35px; line-height: 34px; }
.group .btn { margin-left: 11px; width: 80px; justify-content: flex-start; padding-left: 22px; }
.frow label { flex: none; color: #000; letter-spacing: -.25px; }
.file-row { margin-top: 38px; } .file-row label { width: 129px; line-height: 32px; } .file-row .field { width: 540px; padding: 0; line-height: 41px; }
.file-row .field span { margin-left: -14.500px; letter-spacing: -.2px; }
.rep { margin-top: 47px; } .rep label, .colorby label { width: 210px; line-height: 12px; }
.pop { width: 460px; justify-content: flex-start; padding-left: 16px; letter-spacing: -.2px; }
.crow { align-items: center; letter-spacing: -.22px; }
.crow span { margin-top: 1px; }
.chk { width: 28px; height: 28px; border-radius: 6px; background: #fff; border: 1.500px solid #bababa; flex: none; margin: 0 8px 0 4px; }
.chk.yes { background: #3b87fb; border: 0; }
.axes { margin-top: 32px; } .axes span { width: 182px; } .axed { width: 690px; }
.sec { margin: 0; height: 36px; line-height: 34px; border-bottom: 2px solid #fff; box-shadow: inset 0 -1.500px #b5b5b5; color: #000; font-size: 26px; font-weight: 700; letter-spacing: .1px; }
.s1 { margin-top: 31px; } .s2 { margin-top: 21px; } .s3 { margin-top: 21px; } .s4 { margin-top: 16px; }
.colorby { margin-top: 21px; }
.multi { margin-top: 29px; }
.solid { margin-top: 21px; padding-left: 24px; gap: 20px; } .solid .combo { width: 375px; padding-left: 21px; letter-spacing: -.15px; }
.solid em { width: 27px; height: 27px; border-radius: 50%; border: 2px solid #2b1d10; background: #c68143; margin-right: 8px; }
.comp { width: 300px; }
.maps { margin-top: 24px; padding-left: 14px; gap: 11px; } .medit { width: 145px; gap: 12px; } .m { width: 97px; } .cutm svg { margin-left: 6px; }
.mk { font: italic 700 28px "Liberation Serif", serif; fill: #222; }
.mapsc { margin-top: 30px; } .interp { margin-top: 20px; }
.op { margin-top: 18px; } .li { margin-top: 24px; }
.sl label { width: 204px; line-height: 18px; }
.track { width: 342px; height: 6px; margin: 18px 31px 0 0; border-radius: 3px; background: #b8b8b8; flex: none; display: flex; align-items: center; }
.track i { width: 31px; height: 31px; border-radius: 50%; background: #fff; border: 1px solid #c8c8c8; box-shadow: 0 1px 2px rgba(0,0,0,.2); margin-left: -1px; flex: none; }
.track.full { background: #3b87fb; justify-content: flex-end; } .track.full i { margin: 0 -1px 0 0; }
.sl .field { width: 100px; }
.num label { width: 199px; line-height: 30px; } .num .field { width: 500px; }
.ps { margin-top: 18px; } .lw { margin-top: 10px; }
.linecolor { margin-top: 9px; height: 51px; width: 700px; border: 2px solid #adadad; background: linear-gradient(#e2e2e2, #f5f5f5); align-items: center; font-size: 19.500px; padding: 2px 0 0 5px; letter-spacing: .2px; }
.linecolor i { width: 29px; height: 29px; border-radius: 50%; background: #00007f; border: 1px solid #223; margin-right: 6px; }

.center { width: 1874px; flex: none; border-right: 2px solid #8f8f8f; display: flex; flex-direction: column; }
.layouts { height: 52px; flex: none; padding-top: 1px; margin: 0 7px; display: flex; justify-content: center; background: linear-gradient(#ebebeb 20px, #e2e2e2 20px); }
.layouts .tabs { width: 315px; margin-left: -5px; }
.lay { width: 257px; padding: 0 13px 0 5px; justify-content: flex-start; letter-spacing: .1px; }
.lay span { margin: 2px auto 0 29px; }
.plus { width: 58px; padding-left: 6px; }
.viewbar { height: 46px; flex: none; margin: 0 7px; background: #e2e2e2; display: flex; padding-bottom: 2px; }
.vtools { width: 872px; background: linear-gradient(#ececec, #c6c6c6); border-top: 1px solid #fff; border-bottom: 3px solid #adadad; display: flex; flex: none; }
.v { width: 44px; display: flex; align-items: center; justify-content: center; flex: none; }
.dim { opacity: .45; }
.d2 { font-size: 22px; color: #000; letter-spacing: -1px; }
.vsep { width: 12px; flex: none; background: linear-gradient(#777 50%, transparent 50%) 5px 2px/2px 6px repeat-y; }
.rv { margin: 4px 24px 4px auto; height: 34px; line-height: 34px; font-weight: 700; color: #000; border-bottom: 2px solid #000; letter-spacing: 0; }
.vb { width: 42px; margin-right: 4px; border: 2px solid #b0b0b0; background: linear-gradient(#e6e6e6, #f6f6f6); display: flex; align-items: center; justify-content: center; flex: none; }
.vb:last-child { margin-right: 0; }
.render { height: 1072px; width: 1860px; flex: none; margin-left: 7px; border: 4px solid #0000ff; padding: 2px; background: #e6e6e6; }
.render svg { background: #52576b; overflow: hidden; }
.axl { font: 24px "Liberation Sans", sans-serif; fill: #fff; }
.dock.out { margin-top: 5px; height: 47px; border-top: 2px solid #a3a3a3; padding: 0 0 1px 5px; }
.out .dt { margin-right: 6px; letter-spacing: -.2px; }
.msgs { margin: 24px 0 0 25px; width: 1824px; height: 382px; flex: none; background: #fff; border: 1px solid #b4b4b4; border-top: 2px solid #939393; padding: 6px 9px; font: 24px "Liberation Mono", monospace; letter-spacing: -.03px; color: #008000; }
.msgs p { margin: 0; height: 48px; line-height: 28px; white-space: nowrap; }
.foot { height: 40px; margin-top: 39px; padding: 0 35px 0 26px; display: flex; align-items: center; letter-spacing: -.4px; }
.clear { width: 122px; margin-left: auto; letter-spacing: -.2px; }

.right { flex: 1; min-width: 0; padding-left: 1px; display: flex; flex-direction: column; }
.right .dock { padding-bottom: 1px; }
.right .dt { margin: 3px 3px 0 0; letter-spacing: -.1px; }
.tree { margin: 24px 0 0 24px; width: 731px; height: 1653px; background: #fff; border: 1px solid #b0b0b0; border-top: 2px solid #8f8f8f; overflow: hidden; }
.thead { height: 35px; background: #ebebeb; display: flex; align-items: center; justify-content: space-between; padding: 0 16px 2px 9px; font-size: 22.500px; border-right: 2px solid #bdbdbd; }
.trow { display: flex; align-items: center; height: 61px; padding-left: 15px; white-space: nowrap; color: #000; font-size: 27px; }
.eye { margin: 0 6px 0 12px; } .doc { margin-right: 30px; }
```
